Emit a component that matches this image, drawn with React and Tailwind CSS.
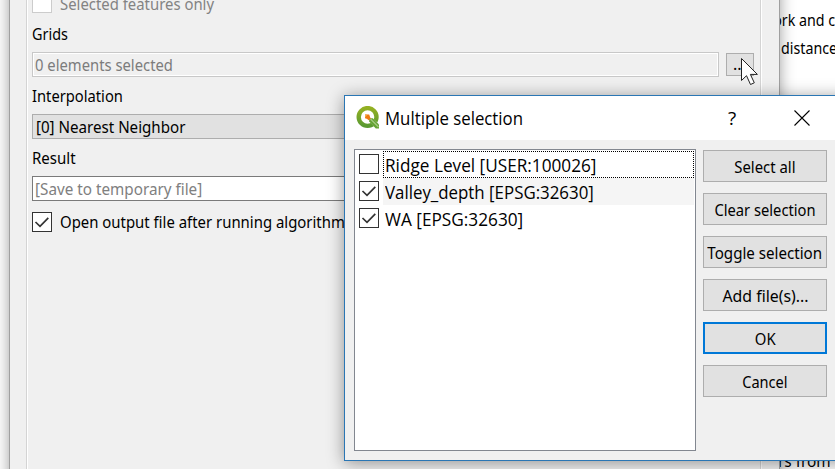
import React from "react";

const UI = "font-['Noto_Sans',sans-serif]";
const SEGOE = "font-['Open_Sans','Noto_Sans',sans-serif]";

function Label({ className = "", children }) {
  return <span className={`inline-block origin-left whitespace-pre ${className}`}>{children}</span>;
}

function Tick({ checked, className = "" }) {
  return (
    <span className={`flex size-5 shrink-0 items-center justify-center border border-[#333] bg-white ${className}`}>
      {checked && (
        <svg width="18" height="18" viewBox="0 0 18 18" fill="none" stroke="#333" strokeWidth="1.7">
          <path d="M2.5 9 L7 13.3 L15.3 4.8" />
        </svg>
      )}
    </span>
  );
}

function Background() {
  return (
    <div className={`absolute left-[770px] top-0 h-[469px] w-[90px] text-[16px] leading-[28px] text-black ${UI}`}>
      <div className="flex h-full flex-col justify-between whitespace-pre">
        <div className="pt-[6px]">
          <div><Label className="ml-[-8px] scale-x-[0.89]">work and c</Label></div>
          <div><Label className="ml-[11px] scale-x-[0.89]">distance</Label></div>
        </div>
        <div className="h-[22px]"><Label className="ml-[8px] scale-x-[0.96]">rs from</Label></div>
      </div>
    </div>
  );
}

function AlgorithmWindow() {
  return (
    <div className={`absolute left-[9px] -top-5 h-[520px] w-[771px] border border-[#a0a0a0] bg-[#f0f0f0] pl-4 pr-[18px] text-[16px] leading-5 text-black shadow-[0_0_14px_rgba(0,0,0,0.38)] ${UI}`}>
      <div className="h-full border-x border-[#d4d4d4] pl-[5px] pr-[6px] shadow-[inset_1px_0_0_#fff,1px_0_0_#fff]">
        <div className="flex h-8 items-end">
          <span className="size-5 border border-[#ccc] bg-white" />
          <Label className="ml-2 mb-[-3px] h-[22px] leading-[20px] text-[#838383] scale-x-[0.93]">Selected features only</Label>
        </div>
        <div className="mt-[11px] h-5"><Label className="scale-x-[0.9]">Grids</Label></div>
        <div className="mt-[8px] flex items-center justify-between">
          <div className="flex h-[25px] w-[687px] items-center border border-[#c8c8c8] pl-[2px] text-[#7c7c7c] shadow-[inset_0_0_0_1px_#fff]">
            <Label className="scale-x-[0.925]">0 elements selected</Label>
          </div>
          <div className="h-[23px] w-7 border border-[#adadad] bg-[#e1e1e1] pl-[6px] leading-[20px]">...</div>
        </div>
        <div className="mt-[9px] h-5"><Label className="scale-x-[0.92]">Interpolation</Label></div>
        <div className="mt-[8px] flex h-[25px] items-center border border-[#adadad] bg-[#e1e1e1] pl-[3px]">
          <Label className="scale-x-[0.945]">[0] Nearest Neighbor</Label>
        </div>
        <div className="mt-[9px] h-5"><Label className="scale-x-[0.94]">Result</Label></div>
        <div className="mt-[8px] flex h-[25px] items-center border border-[#7a7a7a] bg-white pl-[2px] text-[#808080]">
          <Label className="scale-x-[0.953]">[Save to temporary file]</Label>
        </div>
        <div className="mt-[10px] flex items-center">
          <Tick checked />
          <Label className="ml-2 pt-px scale-x-[0.932]">Open output file after running algorithm</Label>
        </div>
      </div>
    </div>
  );
}

function QgisLogo() {
  return (
    <svg width="24" height="24" viewBox="0 0 24 24" fill="none">
      <defs>
        <linearGradient id="ring" x1="0" y1="0" x2="0" y2="1">
          <stop offset="0" stopColor="#93b023" />
          <stop offset="1" stopColor="#5a9a32" />
        </linearGradient>
      </defs>
      <circle cx="11.6" cy="11" r="8.9" stroke="url(#ring)" strokeWidth="4.4" />
      <path d="M11.5 13.5l3-3 9.5 8.5v5h-2.5z" fill="#fff" />
      <path d="M13.2 15.4v-3.2h3.6l6.2 6.3v4h-3.2z" fill="#64a334" />
      <path d="M14.5 13l8 8" stroke="#a5ca83" strokeWidth="1.3" />
      <path d="M9 8.500h4.200l1 3 .8 1-2.800 1.800-.8-1.300-2.400-.8z" fill="#ee7913" />
      <path d="M9 8.500h2.500l-2.500 3z" fill="#f3b04b" />
    </svg>
  );
}

const layers = [
  { name: "Ridge Level [USER:100026]", checked: false, row: "border border-dotted border-black pl-px", text: "scale-x-[0.955]" },
  { name: "Valley_depth [EPSG:32630]", checked: true, row: "bg-[#f5f5f5] pl-[2px]", text: "scale-x-[0.937]" },
  { name: "WA [EPSG:32630]", checked: true, row: "pl-[2px]", text: "scale-x-[0.957]" },
];

const buttons = [
  { name: "Select all", text: "scale-x-[0.93]" },
  { name: "Clear selection", text: "scale-x-[0.92]" },
  { name: "Toggle selection", text: "scale-x-[0.945]" },
  { name: "Add file(s)...", text: "scale-x-[0.99]" },
  { name: "OK", text: "scale-x-[0.93]" },
  { name: "Cancel", text: "scale-x-[0.91]" },
];

function SelectionDialog() {
  return (
    <div className="absolute left-[344px] top-[95px] flex h-[366px] w-[520px] flex-col border border-[#2a76b4] bg-[#f0f0f0] text-black shadow-[0_2px_16px_rgba(0,0,0,0.4)]">
      <div className={`flex h-[44px] items-center bg-white pl-[11px] text-[17.5px] ${SEGOE}`}>
        <QgisLogo />
        <Label className="ml-[5px] w-[343px] pt-px scale-x-[0.96]">Multiple selection</Label>
        <span className="w-[66px] text-[19px]">?</span>
        <svg width="16" height="16" viewBox="0 0 16 16" stroke="#000" strokeWidth="1.1">
          <path d="M.5.5l15 15M15.5.5l-15 15" />
        </svg>
      </div>
      <div className="flex pl-[9px] pt-[9px]">
        <div className={`h-[302px] w-[342px] border border-[#828790] bg-white p-px text-[18px] ${SEGOE}`}>
          {layers.map((l) => (
            <div key={l.name} className="flex h-[27px] items-center pl-[3px]">
              <Tick checked={l.checked} className="mt-[-1px]" />
              <div className={`ml-[4px] flex h-[27px] flex-1 items-center pt-[2px] ${l.row}`}>
                <Label className={l.text}>{l.name}</Label>
              </div>
            </div>
          ))}
        </div>
        <div className={`ml-[7px] mt-px flex w-[124px] flex-col gap-[11px] text-[16px] ${UI}`}>
          {buttons.map((b) => (
            <button
              key={b.name}
              className={`flex h-8 items-center justify-center whitespace-pre bg-[#e1e1e1] pt-[2px] ${b.name === "OK" ? "border-2 border-[#0078d7]" : "border border-[#adadad]"}`}
            >
              <span className={b.text}>{b.name}</span>
            </button>
          ))}
        </div>
      </div>
    </div>
  );
}

function Cursor() {
  return (
    <svg className="absolute left-[740px] top-[57px]" width="21" height="30" viewBox="0 0 21 30">
      <path d="M1.5 1.5v22l5-4.8 4 8.8 3.8-1.7-3.9-8.4h7z" fill="#fff" stroke="#222" strokeWidth="1" />
    </svg>
  );
}

export default function App() {
  return (
    <div className="relative h-[469px] w-[835px] overflow-hidden bg-white">
      <Background />
      <AlgorithmWindow />
      <SelectionDialog />
      <Cursor />
    </div>
  );
}
